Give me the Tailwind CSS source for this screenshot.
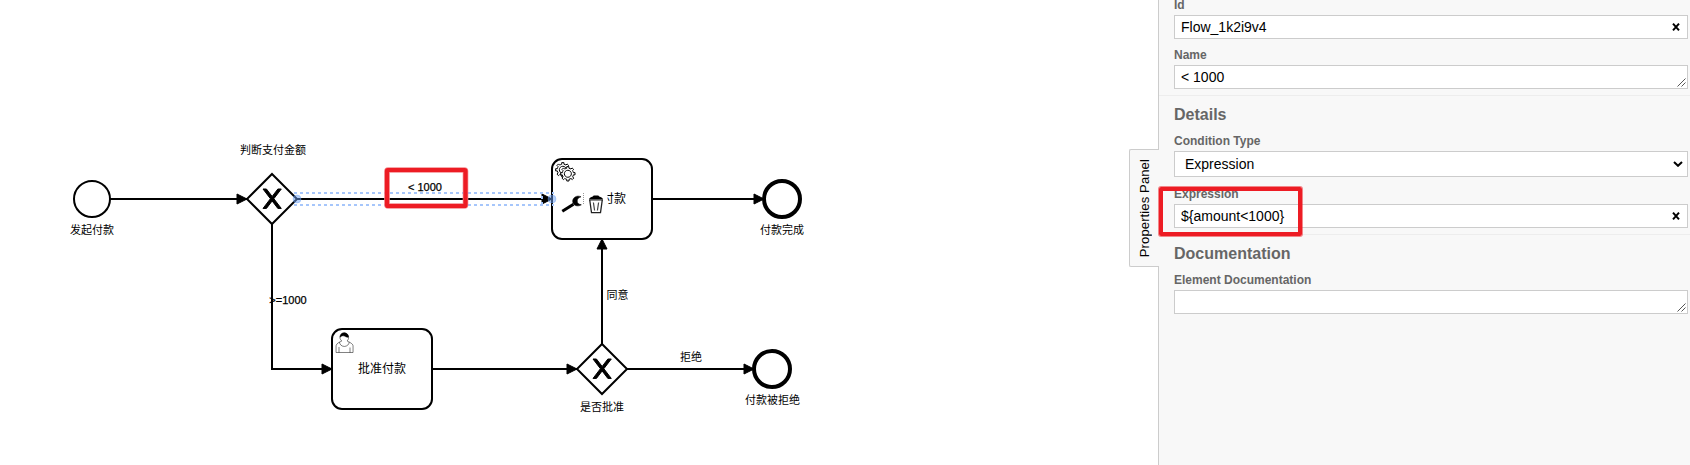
<!DOCTYPE html>
<html lang="zh-CN">
<head>
<meta charset="utf-8">
<title>BPMN Modeler</title>
<script src="https://cdn.jsdelivr.net/npm/@tailwindcss/browser@4"></script>
</head>
<body class="bg-white text-black font-['Liberation_Sans','Noto_Sans_CJK_SC',sans-serif]">
<div class="relative flex h-[465px] w-[1690px] overflow-hidden">
  <!-- diagram canvas -->
  <main class="min-w-0 flex-1">
    <svg class="block" width="1129" height="465" viewBox="0 0 1129 465" fill="none">
      <defs>
        <marker id="arrow" viewBox="0 0 20 20" refX="11" refY="10" markerWidth="10" markerHeight="10" orient="auto">
          <path d="M1 5L11 10L1 15Z" fill="#000" stroke="#000" stroke-width="1"/>
        </marker>
        <path id="cross" d="m 16,15 7.4286,9.7143 -7.4286,9.7143 3.4286,0 5.7143,-7.4642 5.7143,7.4642 3.4286,0 -7.4286,-9.7143 7.4286,-9.7143 -3.4286,0 -5.7143,7.4642 -5.7143,-7.4642 -3.4286,0 z" fill="#000" stroke="#000"/>
        <path id="gear" d="m 12,18 v -1.71335 c 0.352326,-0.0705 0.703932,-0.17838 1.047628,-0.32133 0.344416,-0.14465 0.665822,-0.32133 0.966377,-0.52145 l 1.19431,1.18005 1.567487,-1.57688 -1.195028,-1.18014 c 0.403376,-0.61394 0.683079,-1.29908 0.825447,-2.01824 l 1.622133,-0.01 v -2.2196 l -1.636514,0.01 c -0.07333,-0.35153 -0.178319,-0.70024 -0.323564,-1.04372 -0.145244,-0.34406 -0.321407,-0.6644 -0.522735,-0.96217 l 1.131035,-1.13631 -1.583305,-1.56293 -1.129598,1.13589 c -0.614052,-0.40108 -1.302883,-0.68093 -2.022633,-0.82247 l 0.0093,-1.61852 h -2.241173 l 0.0042,1.63124 c -0.353763,0.0736 -0.705369,0.17977 -1.049785,0.32371 -0.344415,0.14437 -0.665102,0.32092 -0.9635,0.52046 l -1.16986,-1.15823 -1.56677,1.5792 1.16843,1.15669 c -0.40266,0.61283 -0.68308,1.29797 -0.82473,2.01713 l -1.6588,0.003 v 2.22174 l 1.67246,-0.006 c 0.07333,0.35077 0.17976,0.70243 0.32429,1.04472 0.14524,0.34448 0.32141,0.6644 0.52273,0.96066 l -1.19934,1.19723 1.58403,1.56011 1.19647,-1.19348 c 0.61405,0.40346 1.30288,0.68232 2.02335,0.82331 l 0.00072,1.69892 h 2.226848 z m 0.221462,-3.9957 c -1.788948,0.7502 -3.8576,-0.0928 -4.6097,-1.87438 -0.75211,-1.78321 0.0906,-3.84627 1.88026,-4.59604 1.78823,-0.74936 3.856881,0.0929 4.608987,1.87437 0.752106,1.78165 -0.0906,3.84612 -1.879546,4.59605 z" fill="#fff" stroke="#000"/>
      </defs>

      <g stroke="#000" stroke-width="2">
        <circle cx="92" cy="199" r="18"/>
        <path d="M272 174L297 199L272 224L247 199Z"/>
        <path d="M602 344L627 369L602 394L577 369Z"/>
        <rect x="552" y="159" width="100" height="80" rx="10"/>
        <rect x="332" y="329" width="100" height="80" rx="10"/>
        <circle cx="782" cy="199" r="18" stroke-width="4"/>
        <circle cx="772" cy="369" r="18" stroke-width="4"/>
        <path d="M110 199H247" marker-end="url(#arrow)"/>
        <path d="M297 199H552" marker-end="url(#arrow)"/>
        <path d="M652 199H764" marker-end="url(#arrow)"/>
        <path d="M272 224V369H332" marker-end="url(#arrow)"/>
        <path d="M432 369H577" marker-end="url(#arrow)"/>
        <path d="M602 344V239" marker-end="url(#arrow)"/>
        <path d="M627 369H754" marker-end="url(#arrow)"/>
      </g>
      <use href="#cross" x="247" y="174"/>
      <use href="#cross" x="577" y="344"/>

      <!-- service task gears -->
      <use href="#gear" x="552" y="159"/>
      <circle cx="568" cy="173.2" r="5" fill="#fff"/>
      <use href="#gear" x="557" y="163"/>

      <!-- user task figure -->
      <g transform="translate(332 329)">
        <path stroke="#000" stroke-width=".5" fill="#fff" d="m 15,12 c 0.909,-0.845 1.594,-2.049 1.594,-3.385 0,-2.554 -1.805,-4.622 -4.357,-4.622 -2.552,0 -4.288,2.068 -4.288,4.622 0,1.348 0.974,2.562 1.896,3.405 -0.529,0.187 -5.669,2.097 -5.794,4.756 v 6.718 h 17 v -6.718 c 0,-2.298 -5.528,-4.595 -6.051,-4.776z m -8,6 l 0,5.5 m 11,0 l 0,-5"/>
        <path stroke="#000" stroke-width=".5" d="m 17.162,13.009 c 0,2.447 -2.158,4.431 -4.821,4.431 -2.665,0 -4.822,-1.981 -4.822,-4.431"/>
        <path stroke="#000" stroke-width=".5" fill="#000" d="m 8.1,8.2 c 0,0 2.251,-2.358 4.274,-1.177 2.024,1.181 4.221,1.537 4.124,0.965 -0.098,-0.57 -0.117,-3.791 -4.191,-4.136 -3.572,0 -4.207,3.036 -4.207,4.348z"/>
      </g>

      <!-- connection selection outline and end handles -->
      <g stroke="#a6c6fb" stroke-width="2" stroke-dasharray="3 3">
        <path d="M294 193H554"/>
        <path d="M294 205H554"/>
        <path d="M542 196V204"/>
      </g>
      <g fill="#6ea2f5" fill-opacity=".5" stroke="#6ea2f5" stroke-opacity=".35">
        <circle cx="297" cy="199" r="4"/>
        <circle cx="552" cy="199" r="4"/>
      </g>

      <!-- labels -->
      <g fill="#000" font-size="11" text-anchor="middle">
        <text x="92" y="234">发起付款</text>
        <text x="273" y="154">判断支付金额</text>
        <g stroke="#000" stroke-width=".25">
          <text x="425" y="191">&lt; 1000</text>
          <text x="288" y="304">&gt;=1000</text>
        </g>
        <text x="617.5" y="299">同意</text>
        <text x="691" y="361">拒绝</text>
        <text x="782" y="234">付款完成</text>
        <text x="602" y="411">是否批准</text>
        <text x="772.5" y="404">付款被拒绝</text>
        <g font-size="12">
          <text x="382" y="373">批准付款</text>
          <text x="614" y="203">付款</text>
        </g>
      </g>

      <!-- context pad: wrench and trash -->
      <path d="M560 190H607.500V216H560Z" fill="#fff"/>
      <path d="M583.5 193V204" stroke="#999" stroke-dasharray="1 1"/>
      <path d="M562.3 211.200L573.500 204.300" stroke="#000" stroke-width="3"/>
      <path d="M581 196.800C577 194.900 572.700 197.400 572.700 201.200C572.700 205.300 577.500 207.200 581.300 204.800C578.400 204.300 577.200 202.900 577.200 200.900C577.200 199 578.600 197.400 581 196.800Z" fill="#000" stroke="#000" stroke-width=".6"/>
      <path d="M589 199C590 197 593 197.200 593.700 195.600H598.300C599 197.200 602 197 603 199Z" fill="#000"/>
      <path d="M589 199.800H603M589.800 200.500L591.500 212.700H600.500L602.200 200.500" stroke="#222" stroke-width="1.3"/>
      <path d="M593.4 202.500L594.600 210.500M598.600 202.500L597.4 210.500" stroke="#444" stroke-width="1.2"/>

      <!-- highlight around the condition label -->
      <rect x="387" y="170" width="78.5" height="36" rx="1" stroke="#f58a8e" stroke-width="5.6"/>
      <rect x="387" y="170" width="78.5" height="36" rx="1" stroke="#ed1c24" stroke-width="4.2"/>
    </svg>
  </main>

  <!-- vertical toggle -->
  <div class="z-10 -mr-px mt-[149px] flex h-[118px] w-[30px] shrink-0 items-center justify-center rounded-l-xs border border-r-0 border-[#ccc] bg-[#f8f8f8]">
    <span class="rotate-180 text-[13px] leading-none tracking-[0.01em] whitespace-nowrap [writing-mode:vertical-rl]">Properties Panel</span>
  </div>

  <!-- properties panel -->
  <aside class="relative w-[532px] shrink-0 border-l border-[#ccc] bg-[#f8f8f8] text-sm">
    <section class="-mt-1 border-b border-[#ededed] pr-0.5 pb-1.5 pl-[15px]">
      <label class="block text-xs leading-[18px] font-bold text-[#666]">Id</label>
      <div class="mt-px flex h-6 items-center justify-between border border-[#ccc] bg-white pr-[7px] pl-1.5">
        <span>Flow_1k2i9v4</span>
        <svg width="8" height="8" viewBox="0 0 8 8"><path d="M1 .7L7 7.3M7 .7L1 7.3" stroke="#000" stroke-width="2"/></svg>
      </div>
      <label class="mt-[7px] block text-xs leading-[18px] font-bold text-[#666]">Name</label>
      <div class="mt-px flex h-6 items-center justify-between border border-[#ccc] bg-white pr-px pl-1.5">
        <span>&lt; 1000</span>
        <svg class="self-end" width="9" height="10" viewBox="0 0 9 10"><path d="M.5 8.5L8.5 .5M4.5 8.5L8.5 4.5" stroke="#555"/></svg>
      </div>
    </section>
    <section class="border-b border-[#ededed] pt-[9px] pr-0.5 pb-1.5 pl-[15px]">
      <h3 class="mb-[7px] text-base leading-5 font-bold text-[#666]">Details</h3>
      <label class="block text-xs leading-[18px] font-bold text-[#666]">Condition Type</label>
      <div class="mt-px flex h-[26px] items-center justify-between border border-[#ccc] bg-white pr-1 pl-2.5">
        <span>Expression</span>
        <svg width="10" height="6" viewBox="0 0 10 6" fill="none"><path d="M1 1L5 4.800L9 1" stroke="#000" stroke-width="2"/></svg>
      </div>
      <label class="mt-2 block text-xs leading-[18px] font-bold text-[#666]">Expression</label>
      <div class="mt-px flex h-6 items-center justify-between border border-[#ccc] bg-white pr-[7px] pl-1.5">
        <span>${amount&lt;1000}</span>
        <svg width="8" height="8" viewBox="0 0 8 8"><path d="M1 .7L7 7.3M7 .7L1 7.3" stroke="#000" stroke-width="2"/></svg>
      </div>
    </section>
    <section class="pt-[9px] pr-0.5 pl-[15px]">
      <h3 class="mb-[7px] text-base leading-5 font-bold text-[#666]">Documentation</h3>
      <label class="block text-xs leading-[18px] font-bold text-[#666]">Element Documentation</label>
      <div class="mt-px flex h-6 justify-end border border-[#ccc] bg-white pr-px">
        <svg class="self-end" width="9" height="10" viewBox="0 0 9 10"><path d="M.5 8.5L8.5 .5M4.5 8.5L8.5 4.5" stroke="#555"/></svg>
      </div>
    </section>
  </aside>

  <!-- highlight around the expression field -->
  <div class="absolute top-[187px] left-[1159px] z-20 h-[49px] w-[143px] rounded-xs border-4 border-[#ed1c24] ring-1 ring-[#ed1c24]/40 outline-1 outline-[#ed1c24]/20"></div>
</div>
</body>
</html>
